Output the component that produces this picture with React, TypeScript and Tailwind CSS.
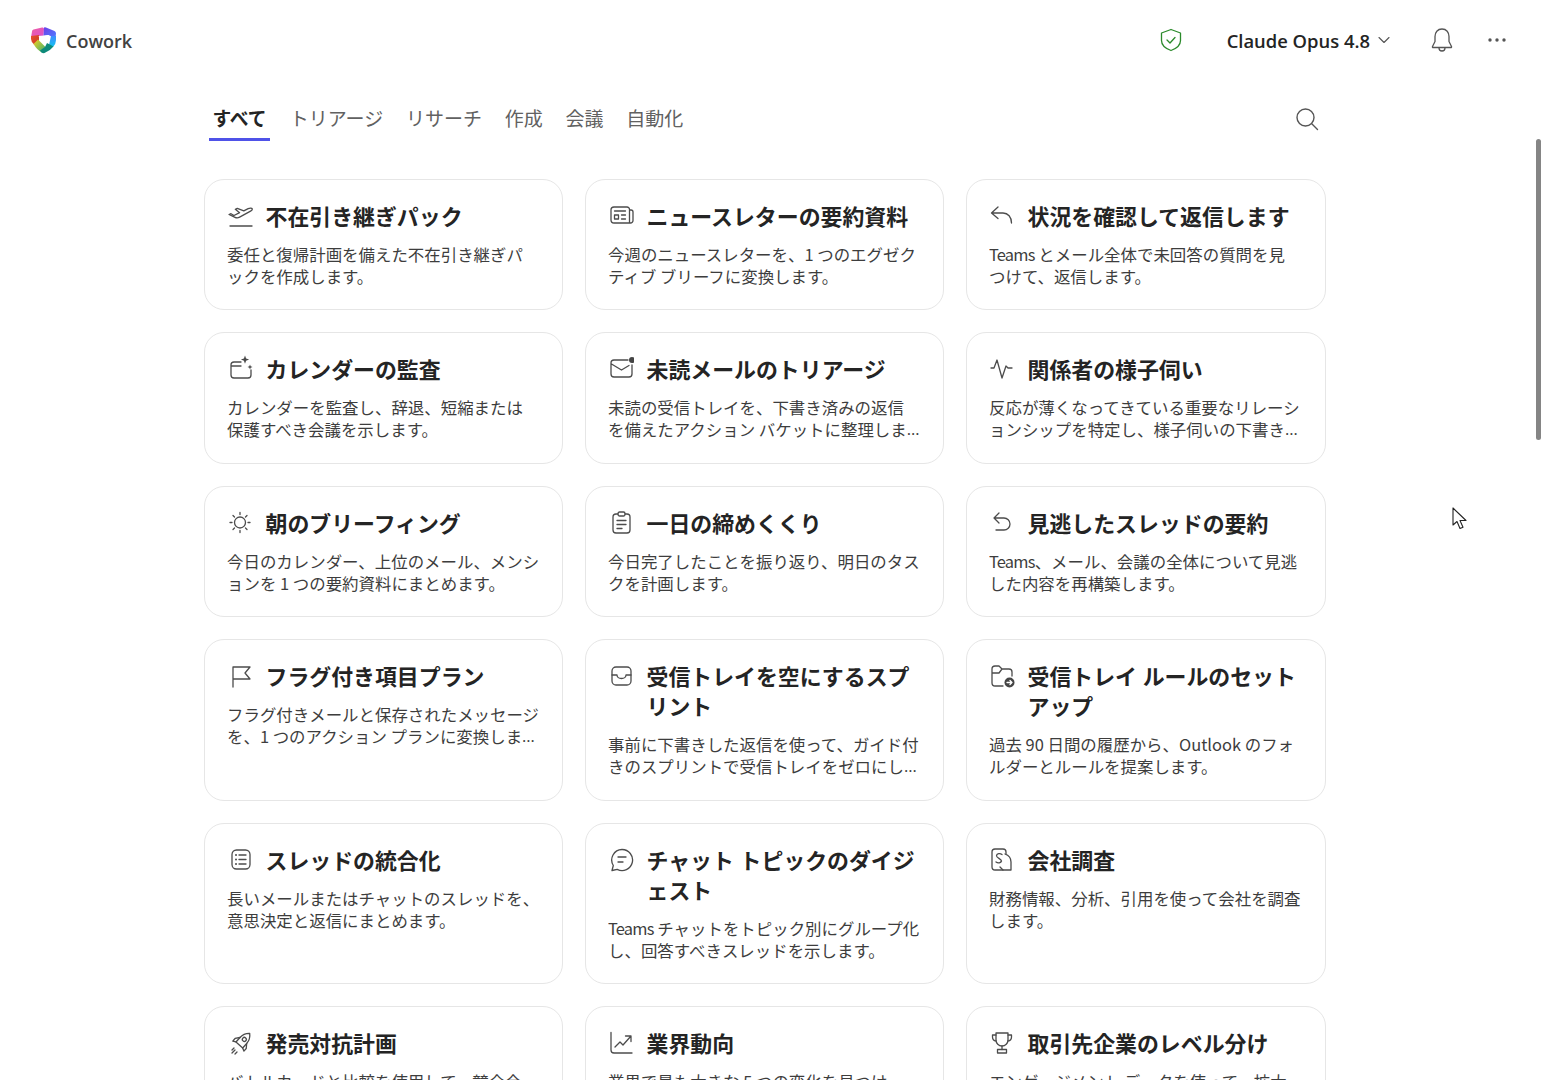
import type { ReactNode } from "react";

function Ico({ children }: { children: ReactNode }) {
  return (
    <svg
      viewBox="0 0 26 26"
      className="h-[26px] w-[26px] shrink-0"
      fill="none"
      stroke="#4c4c4c"
      strokeWidth="1.3"
      strokeLinecap="round"
      strokeLinejoin="round"
    >
      {children}
    </svg>
  );
}

const icons: Record<string, ReactNode> = {
  plane: (
    <>
      <path d="M2 9.500l2-.8 3 1.800 5.600-2.800-4.300-3.400 2-.9 6.500 2.400 4.400-2.200c1.700-.8 3.600-.7 4 .2.4 1-.6 1.800-2.100 2.600l-10.500 5.700c-1.600.9-3.200.9-4.600.2z" transform="translate(0 3)" />
      <path d="M3 24h22" />
    </>
  ),
  calendar: (
    <>
      <path d="M14 7H7a3 3 0 0 0-3 3v10a3 3 0 0 0 3 3h14a3 3 0 0 0 3-3v-5M4 11h10" />
      <path d="M18 0.500l1.100 3 3 1.100-3 1.100-1.100 3-1.100-3-3-1.100 3-1.100z" fill="#4a4a4a" stroke="none" />
      <path d="M23 9.500l.7 1.800 1.800.7-1.800.7-.7 1.800-.7-1.800-1.800-.7 1.800-.7z" fill="#4a4a4a" stroke="none" />
    </>
  ),
  news: (
    <>
      <path d="M6 5h13a2.500 2.500 0 0 1 2.500 2.500V21H6a3 3 0 0 1-3-3V8a3 3 0 0 1 3-3zM21.500 8H23a2 2 0 0 1 2 2v8.500a2.500 2.500 0 0 1-2.500 2.500h-1" />
      <path d="M6.500 9h11M6.500 13h4v4h-4zM13.500 13h4M13.500 17h4" />
    </>
  ),
  reply: <path d="M9 5l-6.500 6L9 16.500M3 11h11c5 0 8.500 4 8.500 10" />,
  mail: (
    <>
      <path d="M20 5H6a3 3 0 0 0-3 3v11a3 3 0 0 0 3 3h15a3 3 0 0 0 3-3V10M3.500 9l10 6 7.500-4.500" />
      <circle cx="24" cy="5" r="3" fill="#444" stroke="none" />
    </>
  ),
  pulse: <path d="M2 13h3l3-8 5 18 4-12 2 2h4" />,
  sun: (
    <>
      <circle cx="13" cy="13.500" r="5.500" />
      <path d="M13 3.500v2M13 21.500v2M3 13.500h2M21 13.500h2M6 6.500l1.500 1.500M18.500 19l1.500 1.500M6 20.500L7.500 19M18.500 8L20 6.500" />
    </>
  ),
  clipboard: (
    <>
      <path d="M10 5H8a3 3 0 0 0-3 3v13a3 3 0 0 0 3 3h11a3 3 0 0 0 3-3V8a3 3 0 0 0-3-3h-2" />
      <rect x="10" y="3" width="7" height="4" rx="1.500" />
      <path d="M9 11.500h9M9 15.500h9M9 19.500h5" />
    </>
  ),
  undo: <path d="M10 4L5 9l5 5M5 9h10a6 6 0 0 1 0 12H7" />,
  flag: <path d="M6 25V5h17l-5 6 5 6H6" />,
  inbox: (
    <>
      <rect x="4" y="5" width="19" height="18" rx="4" />
      <path d="M4 13h5c0 2 2 3.500 4.500 3.500S18 15 18 13h5" />
    </>
  ),
  folder: (
    <>
      <path d="M14 24H6a3 3 0 0 1-3-3V7a3 3 0 0 1 3-3h4l3 3h7a3 3 0 0 1 3 3v4M3 11h7l3-4" />
      <circle cx="20.500" cy="20.500" r="5" fill="#444" stroke="none" />
      <path d="M18 20.500h5M21 18.500l2 2-2 2" stroke="#fff" />
    </>
  ),
  list: (
    <>
      <rect x="5" y="4" width="18" height="19" rx="4.500" />
      <path d="M12 9h7M12 13.500h7M12 18h7" />
      <path d="M9 9h.01M9 13.500h.01M9 18h.01" strokeWidth="2" />
    </>
  ),
  chat: (
    <>
      <path d="M14 3.500a10.500 10.500 0 1 1-4.800 19.800L4 24.500l1.300-5A10.500 10.500 0 0 1 14 3.500z" />
      <path d="M10 11h8M10 16h5" />
    </>
  ),
  company: (
    <>
      <path d="M14 24H6a3 3 0 0 1-3-3V6a3 3 0 0 1 3-3h8a3 3 0 0 1 3 3v2" />
      <path d="M13 8.500c-2-1.500-5-1-5.500 1-.5 2.500 5 3 5 5.500-.5 2-3.500 2.500-5.500 1" />
      <path d="M16 8c3 1 6 4 6 8v8h-8l-3-3" />
    </>
  ),
  rocket: (
    <>
      <g transform="rotate(42 15 13)">
        <path d="M15 1.500c3 2.500 4.500 6 4.500 9.500v6h-9v-6c0-3.500 1.500-7 4.500-9.500z" />
        <circle cx="15" cy="9.500" r="2" />
        <path d="M10.500 11l-3 4v3.500l3-1.500M19.500 11l3 4v3.500l-3-1.500" />
      </g>
      <path d="M5 24l3-3M8 25l2-2M5 21l2-2" />
    </>
  ),
  chart: <path d="M3 3.500V21a3 3 0 0 0 3 3h18M7 18l5-5 3 3 8-9M17.500 7H23v5.500" />,
  trophy: (
    <>
      <path d="M7 4h12v7a6 6 0 0 1-12 0z" />
      <path d="M7 6H3.500v2a4 4 0 0 0 3.500 4M19 6h3.500v2a4 4 0 0 1-3.500 4M13 17v3.500" />
      <path d="M8.500 20.500h9V24h-9z" />
    </>
  ),
};

const cards = [
  { icon: "plane", title: "不在引き継ぎパック", desc: "委任と復帰計画を備えた不在引き継ぎパ\nックを作成します。" },
  { icon: "news", title: "ニュースレターの要約資料", desc: "今週のニュースレターを、1 つのエグゼクティブ ブリーフに変換します。" },
  { icon: "reply", title: "状況を確認して返信します", desc: "Teams とメール全体で未回答の質問を見\nつけて、返信します。" },
  { icon: "calendar", title: "カレンダーの監査", desc: "カレンダーを監査し、辞退、短縮または\n保護すべき会議を示します。" },
  { icon: "mail", title: "未読メールのトリアージ", desc: "未読の受信トレイを、下書き済みの返信\nを備えたアクション バケットに整理します。" },
  { icon: "pulse", title: "関係者の様子伺い", desc: "反応が薄くなってきている重要なリレーションシップを特定し、様子伺いの下書きを作成します。" },
  { icon: "sun", title: "朝のブリーフィング", desc: "今日のカレンダー、上位のメール、メンションを 1 つの要約資料にまとめます。" },
  { icon: "clipboard", title: "一日の締めくくり", desc: "今日完了したことを振り返り、明日のタスクを計画します。" },
  { icon: "undo", title: "見逃したスレッドの要約", desc: "Teams、メール、会議の全体について見逃した内容を再構築します。" },
  { icon: "flag", title: "フラグ付き項目プラン", desc: "フラグ付きメールと保存されたメッセージを、1 つのアクション プランに変換します。" },
  { icon: "inbox", title: "受信トレイを空にするスプリント", desc: "事前に下書きした返信を使って、ガイド付きのスプリントで受信トレイをゼロにします。" },
  { icon: "folder", title: "受信トレイ ルールのセットアップ", desc: "過去 90 日間の履歴から、Outlook のフォルダーとルールを提案します。" },
  { icon: "list", title: "スレッドの統合化", desc: "長いメールまたはチャットのスレッドを、意思決定と返信にまとめます。" },
  { icon: "chat", title: "チャット トピックのダイジェスト", desc: "Teams チャットをトピック別にグループ化し、回答すべきスレッドを示します。" },
  { icon: "company", title: "会社調査", desc: "財務情報、分析、引用を使って会社を調査します。" },
  { icon: "rocket", title: "発売対抗計画", desc: "バトルカードと比較を使用して、競合会\n社の発売に備えます。" },
  { icon: "chart", title: "業界動向", desc: "業界で最も大きな 5 つの変化を見つけ\nます。" },
  { icon: "trophy", title: "取引先企業のレベル分け", desc: "エンゲージメント データを使って、拡大の機会を見つけます。" },
];

const tabs = ["トリアージ", "リサーチ", "作成", "会議", "自動化"];

function Logo() {
  return (
    <svg viewBox="0 0 28 28" className="h-7 w-7 shrink-0">
      <defs>
        <linearGradient id="lgA" x1="0" y1="0" x2="1" y2="1">
          <stop offset="0" stopColor="#f15fa0" />
          <stop offset="1" stopColor="#d94fd0" />
        </linearGradient>
        <linearGradient id="lgB" x1="0" y1="0" x2="1" y2="1">
          <stop offset="0" stopColor="#6a3fe8" />
          <stop offset="1" stopColor="#4f7cff" />
        </linearGradient>
        <linearGradient id="lgC" x1="0" y1="0" x2="0" y2="1">
          <stop offset="0" stopColor="#3f8cff" />
          <stop offset="1" stopColor="#12c4ee" />
        </linearGradient>
        <linearGradient id="lgE" x1="0" y1="0" x2="1" y2="1">
          <stop offset="0" stopColor="#f7cf1f" />
          <stop offset="1" stopColor="#2fae74" />
        </linearGradient>
        <linearGradient id="lgF" x1="0" y1="0" x2="1" y2="1">
          <stop offset="0" stopColor="#e8512f" />
          <stop offset="1" stopColor="#c9371f" />
        </linearGradient>
      </defs>
      <path d="M3 5.500Q3 4 4.500 3.500L13 1.500Q15 1 15 3L14.500 10L2 11.500Z" fill="url(#lgA)" />
      <path d="M15 1.500Q16 1 17 1.500L25.500 5Q27 5.500 27 7.500L26.500 12L19 9L14.500 10Z" fill="url(#lgB)" />
      <path d="M27 10V14Q27 18 24 21L20 19L22 10Z" fill="url(#lgC)" />
      <path d="M2 10L10 9L10 15L5.500 19Q2 16 2 13Z" fill="url(#lgF)" />
      <path d="M4.500 18L9 13.500L17 21.500L13 26.500Q8 24 4.500 18Z" fill="url(#lgE)" />
      <path d="M18 17L24.500 20.500Q21 25 15.500 27Q14 27.500 12.500 26.500L11 24.500L16 21Z" fill="#0d8a7a" />
      <path d="M9.500 10L20.500 9L14.500 18.500Z" fill="#fff" />
    </svg>
  );
}

function Header() {
  return (
    <header className="flex h-20 items-center justify-between pl-[29px] pr-[55px]">
      <div className="flex items-center gap-[9px]">
        <Logo />
        <span className="mt-[2px] text-[18px] font-semibold text-[#424242]">Cowork</span>
      </div>
      <div className="flex items-center">
        <svg viewBox="0 0 24 24" className="mt-[1px] h-6 w-6" fill="none" stroke="#2b8a2b" strokeWidth="1.300" strokeLinejoin="round" strokeLinecap="round">
          <path d="M12 1.500l9.500 3.500v7.500c0 4.500-4 8-9.500 10-5.500-2-9.500-5.500-9.500-10V5z" />
          <path d="M8 12l3 3 5-5.500" />
        </svg>
        <span className="ml-[44px] mt-[2px] text-[18.4px] font-semibold text-[#242424]">Claude Opus 4.8</span>
        <svg viewBox="0 0 12 8" className="ml-2 mt-[1px] h-2 w-3" fill="none" stroke="#555" strokeWidth="1.100" strokeLinecap="round" strokeLinejoin="round">
          <path d="M1 1.500l5 5 5-5" />
        </svg>
        <svg viewBox="0 0 24 26" className="ml-[40px] h-[26px] w-6" fill="none" stroke="#555" strokeWidth="1.300" strokeLinejoin="round">
          <path d="M12 2c-4.500 0-7 3.500-7 7.500v5L2.500 19.500c-.3.600.1 1 .7 1h17.600c.6 0 1-.4.7-1L19 14.500v-5C19 5.500 16.500 2 12 2z" />
          <path d="M9 21c0 2 1.300 3 3 3s3-1 3-3" />
        </svg>
        <svg viewBox="0 0 18 4" className="ml-[34px] h-1 w-[18px]" fill="#555">
          <circle cx="2" cy="2" r="1.700" />
          <circle cx="9" cy="2" r="1.700" />
          <circle cx="16" cy="2" r="1.700" />
        </svg>
      </div>
    </header>
  );
}

// "Teams" runs tighter in the reference than in Noto
function Desc({ text }: { text: string }) {
  const parts = text.split("Teams");
  if (parts.length === 1) return <>{text}</>;
  return (
    <>
      <span className="tracking-[-0.8px]">Teams</span>
      {parts[1]}
    </>
  );
}

function Card({ icon, title, desc }: { icon: string; title: string; desc: string }) {
  return (
    <div className="rounded-[20px] border border-[#e6e6e6] bg-white px-[22px] pt-[22px] pb-[22.5px]">
      <div className="flex gap-[12.5px]">
        <Ico>{icons[icon]}</Ico>
        <h3 className="min-w-0 flex-1 text-[21.9px] font-bold leading-[30px] text-[#242424]">{title}</h3>
      </div>
      <p className="mt-[11px] line-clamp-2 whitespace-pre-line text-[16.45px] leading-[22px] text-[#3d3d3d]">
        <span className="align-top font-['Noto_Sans_CJK_JP',sans-serif]">
          <Desc text={desc} />
        </span>
      </p>
    </div>
  );
}

export default function App() {
  return (
    <div className="relative h-screen overflow-hidden bg-white font-['Open_Sans','Noto_Sans_CJK_JP',sans-serif]">
      <Header />
      <main className="ml-[204px] w-[1122px]">
        <div className="flex justify-between pr-[7px]">
          <nav className="ml-[5px] flex gap-[14.75px] text-[19px] leading-[28px] text-[#616161]">
            <div className="mr-[1px] w-[61px] whitespace-nowrap border-b-[3px] border-[#4f52e8] pb-[5px] pt-[25px] text-center text-[18.75px] font-bold text-[#242424]">すべて</div>
            {tabs.map((t) => (
              <div key={t} className="px-1 pt-[25px]">{t}</div>
            ))}
          </nav>
          <svg viewBox="0 0 24 24" className="mb-[10px] h-6 w-6 self-end" fill="none" stroke="#555" strokeWidth="1.400" strokeLinecap="round">
            <circle cx="10.500" cy="10.500" r="8.500" />
            <path d="M17 17l5.500 5.500" />
          </svg>
        </div>
        <div className="mt-[37.5px] grid grid-cols-[359px_359px_360px] gap-[22px]">
          {cards.map((c) => (
            <Card key={c.title} {...c} />
          ))}
        </div>
      </main>
      {/* scrollbar thumb and pointer sit over the page */}
      <div className="absolute left-[1536px] top-[139px] h-[301px] w-[5px] rounded-full bg-[#858585]" />
      <svg viewBox="0 0 16 25" className="absolute left-[1452px] top-[507px] h-[25px] w-4" fill="#fff" stroke="#222" strokeWidth="1.100" strokeLinejoin="round">
        <path d="M1 1v17l4-3.500 3 7 3-1.300-3-6.700h6z" />
      </svg>
    </div>
  );
}
